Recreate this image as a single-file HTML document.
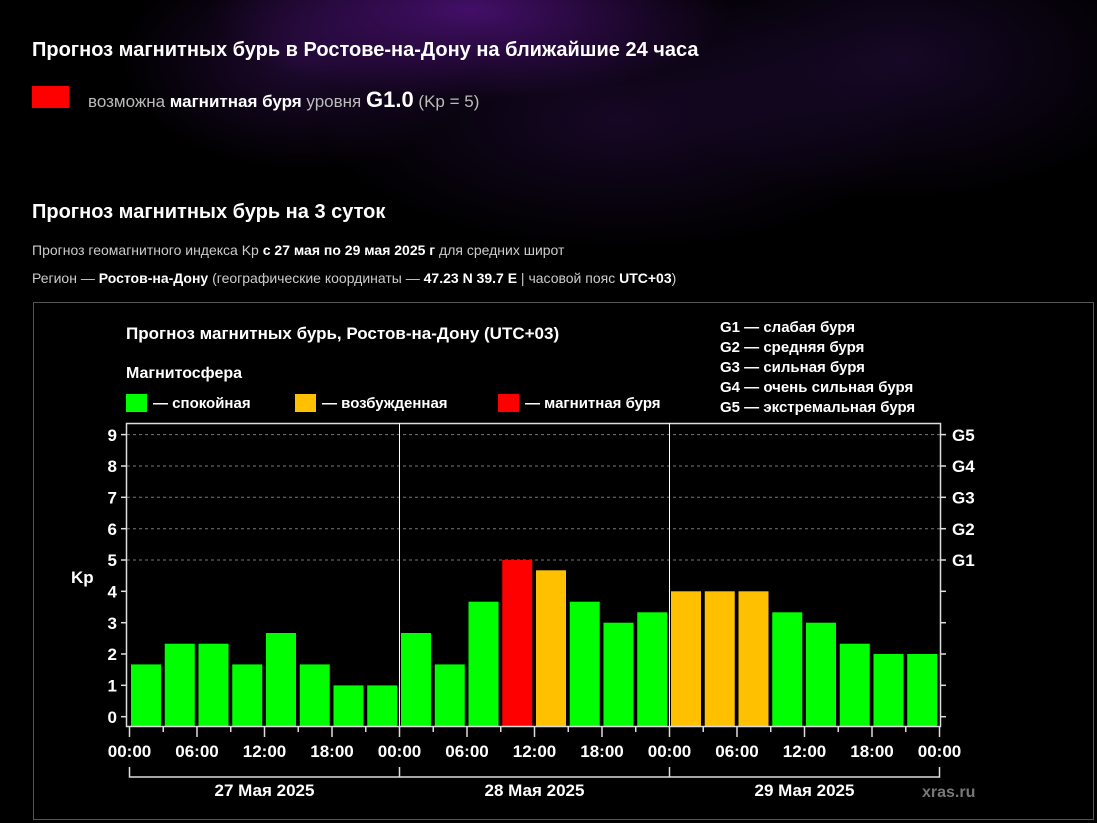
<!DOCTYPE html>
<html><head><meta charset="utf-8"><style>
html,body{margin:0;padding:0;}
body{width:1097px;height:823px;overflow:hidden;background:#000;font-family:"Liberation Sans","DejaVu Sans",sans-serif;color:#fff;position:relative;}
.bg{position:absolute;left:0;top:0;width:1097px;height:420px;background:
radial-gradient(ellipse 260px 90px at 470px 10px,rgba(90,20,140,.75),rgba(0,0,0,0) 100%),
radial-gradient(ellipse 180px 110px at 300px 60px,rgba(50,15,80,.6),rgba(0,0,0,0) 100%),
radial-gradient(ellipse 260px 140px at 900px 60px,rgba(40,15,70,.55),rgba(0,0,0,0) 100%),
radial-gradient(ellipse 300px 130px at 620px 120px,rgba(45,15,75,.5),rgba(0,0,0,0) 100%);}
.t{position:absolute;white-space:nowrap;}
h1{position:absolute;left:32px;top:39px;margin:0;font-size:20px;font-weight:bold;}
h2{position:absolute;left:32px;top:201px;margin:0;font-size:20px;font-weight:bold;}
.sq{position:absolute;left:32px;top:86px;width:37px;height:22px;background:#f00;}
.lvl{left:88px;top:87px;font-size:17px;color:#bbb;}
.lvl b{color:#fff;}
.lvl .g{font-size:22px;font-weight:bold;color:#fff;}
.sm{font-size:14px;color:#ccc;left:32px;}
.sm b{color:#fff;}
</style></head><body>
<div class="bg"></div>
<h1>Прогноз магнитных бурь в Ростове-на-Дону на ближайшие 24 часа</h1>
<div class="sq"></div>
<div class="t lvl">возможна <b>магнитная буря</b> уровня <span class="g">G1.0</span> (Kp = 5)</div>
<h2>Прогноз магнитных бурь на 3 суток</h2>
<div class="t sm" style="top:242px">Прогноз геомагнитного индекса Kp <b>с 27 мая по 29 мая 2025 г</b> для средних широт</div>
<div class="t sm" style="top:270px">Регион — <b>Ростов-на-Дону</b> (географические координаты — <b>47.23 N 39.7 E</b> | часовой пояс <b>UTC+03</b>)</div>
<svg width="1097" height="823" style="position:absolute;left:0;top:0" xmlns="http://www.w3.org/2000/svg" font-family="Liberation Sans, sans-serif" font-weight="bold">
<rect x="33.5" y="302.5" width="1060" height="517" fill="#000" stroke="#555" stroke-width="1"/>
<text x="126" y="339" font-size="17" fill="#fff">Прогноз магнитных бурь, Ростов-на-Дону (UTC+03)</text>
<text x="126" y="378" font-size="16" fill="#fff">Магнитосфера</text>
<rect x="126" y="394" width="21" height="18" fill="#00ff00"/>
<text x="153" y="408" font-size="15" fill="#fff">— спокойная</text>
<rect x="295" y="394" width="21" height="18" fill="#ffc000"/>
<text x="322" y="408" font-size="15" fill="#fff">— возбужденная</text>
<rect x="498" y="394" width="21" height="18" fill="#ff0000"/>
<text x="525" y="408" font-size="15" fill="#fff">— магнитная буря</text>
<g font-size="15" fill="#fff">
<text x="720" y="332">G1 — слабая буря</text>
<text x="720" y="352">G2 — средняя буря</text>
<text x="720" y="372">G3 — сильная буря</text>
<text x="720" y="392">G4 — очень сильная буря</text>
<text x="720" y="412">G5 — экстремальная буря</text>
</g>
<g stroke="#777" stroke-width="1" stroke-dasharray="3,3">
<line x1="127" x2="940" y1="434.6" y2="434.6"/><line x1="127" x2="940" y1="466" y2="466"/><line x1="127" x2="940" y1="497.3" y2="497.3"/><line x1="127" x2="940" y1="528.7" y2="528.7"/><line x1="127" x2="940" y1="560" y2="560"/>
</g>
<g fill="#00ff00">
<rect x="131" y="664.4" width="30" height="62"/>
<rect x="164.75" y="643.7" width="30" height="83"/>
<rect x="198.5" y="643.7" width="30" height="83"/>
<rect x="232.25" y="664.4" width="30" height="62"/>
<rect x="266" y="633" width="30" height="93"/>
<rect x="299.75" y="664.4" width="30" height="62"/>
<rect x="333.5" y="685.4" width="30" height="41"/>
<rect x="367.25" y="685.4" width="30" height="41"/>
<rect x="401" y="633" width="30" height="93"/>
<rect x="434.75" y="664.4" width="30" height="62"/>
<rect x="468.5" y="601.7" width="30" height="125"/>
<rect x="569.75" y="601.7" width="30" height="125"/>
<rect x="603.5" y="622.7" width="30" height="104"/>
<rect x="637.25" y="612.3" width="30" height="114"/>
<rect x="772.25" y="612.3" width="30" height="114"/>
<rect x="806" y="622.7" width="30" height="104"/>
<rect x="839.75" y="643.7" width="30" height="83"/>
<rect x="873.5" y="654" width="30" height="72"/>
<rect x="907.25" y="654" width="30" height="72"/>
</g>
<rect x="502.25" y="560" width="30" height="166" fill="#ff0000"/>
<g fill="#ffc000">
<rect x="536" y="570.3" width="30" height="156"/>
<rect x="671" y="591.3" width="30" height="135"/>
<rect x="704.75" y="591.3" width="30" height="135"/>
<rect x="738.5" y="591.3" width="30" height="135"/>
</g>
<rect x="126.5" y="423.5" width="814" height="303" fill="none" stroke="#ddd" stroke-width="1.5"/>
<line x1="399.5" y1="423" x2="399.5" y2="726" stroke="#fff" stroke-width="1"/>
<line x1="669.5" y1="423" x2="669.5" y2="726" stroke="#fff" stroke-width="1"/>
<g stroke="#ddd" stroke-width="1.5">
<line x1="121" x2="127" y1="716.7" y2="716.7"/><line x1="121" x2="127" y1="685.3" y2="685.3"/><line x1="121" x2="127" y1="654" y2="654"/><line x1="121" x2="127" y1="622.7" y2="622.7"/><line x1="121" x2="127" y1="591.3" y2="591.3"/><line x1="121" x2="127" y1="560" y2="560"/><line x1="121" x2="127" y1="528.7" y2="528.7"/><line x1="121" x2="127" y1="497.3" y2="497.3"/><line x1="121" x2="127" y1="466" y2="466"/><line x1="121" x2="127" y1="434.6" y2="434.6"/>
<line x1="940" x2="946" y1="716.7" y2="716.7"/><line x1="940" x2="946" y1="685.3" y2="685.3"/><line x1="940" x2="946" y1="654" y2="654"/><line x1="940" x2="946" y1="622.7" y2="622.7"/><line x1="940" x2="946" y1="591.3" y2="591.3"/><line x1="940" x2="946" y1="560" y2="560"/><line x1="940" x2="946" y1="528.7" y2="528.7"/><line x1="940" x2="946" y1="497.3" y2="497.3"/><line x1="940" x2="946" y1="466" y2="466"/><line x1="940" x2="946" y1="434.6" y2="434.6"/>
<line x1="129.5" x2="129.5" y1="727" y2="737"/><line x1="163.25" x2="163.25" y1="727" y2="732"/><line x1="197" x2="197" y1="727" y2="737"/><line x1="230.75" x2="230.75" y1="727" y2="732"/><line x1="264.5" x2="264.5" y1="727" y2="737"/><line x1="298.25" x2="298.25" y1="727" y2="732"/><line x1="332" x2="332" y1="727" y2="737"/><line x1="365.75" x2="365.75" y1="727" y2="732"/>
<line x1="399.5" x2="399.5" y1="727" y2="737"/><line x1="433.25" x2="433.25" y1="727" y2="732"/><line x1="467" x2="467" y1="727" y2="737"/><line x1="500.75" x2="500.75" y1="727" y2="732"/><line x1="534.5" x2="534.5" y1="727" y2="737"/><line x1="568.25" x2="568.25" y1="727" y2="732"/><line x1="602" x2="602" y1="727" y2="737"/><line x1="635.75" x2="635.75" y1="727" y2="732"/>
<line x1="669.5" x2="669.5" y1="727" y2="737"/><line x1="703.25" x2="703.25" y1="727" y2="732"/><line x1="737" x2="737" y1="727" y2="737"/><line x1="770.75" x2="770.75" y1="727" y2="732"/><line x1="804.5" x2="804.5" y1="727" y2="737"/><line x1="838.25" x2="838.25" y1="727" y2="732"/><line x1="872" x2="872" y1="727" y2="737"/><line x1="905.75" x2="905.75" y1="727" y2="732"/><line x1="939.5" x2="939.5" y1="727" y2="737"/>
<polyline points="129.5,767 129.5,777 939.5,777 939.5,767" fill="none"/>
<line x1="399.5" x2="399.5" y1="767" y2="777"/><line x1="669.5" x2="669.5" y1="767" y2="777"/>
</g>
<g font-size="17" fill="#fff" text-anchor="end">
<text x="117" y="723">0</text><text x="117" y="691.5">1</text><text x="117" y="660">2</text><text x="117" y="629">3</text><text x="117" y="597.5">4</text><text x="117" y="566">5</text><text x="117" y="535">6</text><text x="117" y="503.5">7</text><text x="117" y="472">8</text><text x="117" y="441">9</text>
</g>
<text x="71" y="583" font-size="17" fill="#fff">Kp</text>
<g font-size="17" fill="#fff">
<text x="952" y="441">G5</text><text x="952" y="472">G4</text><text x="952" y="503.5">G3</text><text x="952" y="535">G2</text><text x="952" y="566">G1</text>
</g>
<g font-size="17" fill="#fff" text-anchor="middle">
<text x="129.5" y="757">00:00</text><text x="197" y="757">06:00</text><text x="264.5" y="757">12:00</text><text x="332" y="757">18:00</text><text x="399.5" y="757">00:00</text><text x="467" y="757">06:00</text><text x="534.5" y="757">12:00</text><text x="602" y="757">18:00</text><text x="669.5" y="757">00:00</text><text x="737" y="757">06:00</text><text x="804.5" y="757">12:00</text><text x="872" y="757">18:00</text><text x="939.5" y="757">00:00</text>
<text x="264.5" y="796">27 Мая 2025</text><text x="534.5" y="796">28 Мая 2025</text><text x="804.5" y="796">29 Мая 2025</text>
</g>
<text x="922" y="797" font-size="16" fill="#777">xras.ru</text>
</svg>
</body></html>
